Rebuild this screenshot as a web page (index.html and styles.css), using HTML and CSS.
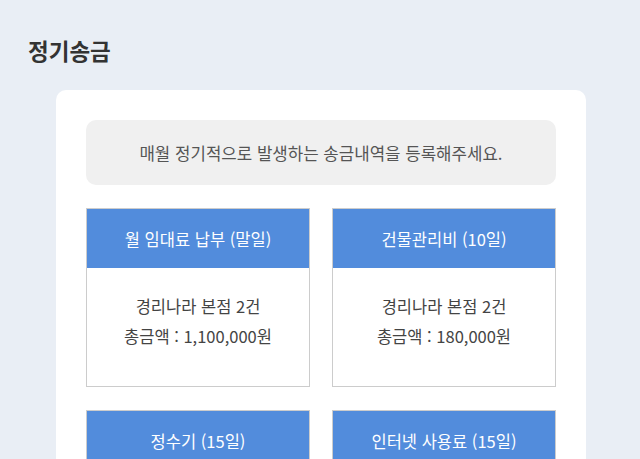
FILE: index.html
```html
<!DOCTYPE html>
<html lang="ko">
<head>
<meta charset="UTF-8">
<meta name="viewport" content="width=device-width, initial-scale=1.0">
<title>정기송금</title>
<link rel="stylesheet" href="styles.css">
</head>
<body>
<h1 class="page-title">정기송금</h1>
<div class="panel">
  <div class="notice">매월 정기적으로 발생하는 송금내역을 등록해주세요.</div>
  <div class="grid">
    <div class="item">
      <div class="item-head">월 임대료 납부 (말일)</div>
      <div class="item-body">
        <p>경리나라 본점 2건</p>
        <p>총금액 : 1,100,000원</p>
      </div>
    </div>
    <div class="item">
      <div class="item-head">건물관리비 (10일)</div>
      <div class="item-body">
        <p>경리나라 본점 2건</p>
        <p>총금액 : 180,000원</p>
      </div>
    </div>
    <div class="item">
      <div class="item-head">정수기 (15일)</div>
      <div class="item-body">
        <p>경리나라 본점 1건</p>
        <p>총금액 : 30,000원</p>
      </div>
    </div>
    <div class="item">
      <div class="item-head">인터넷 사용료 (15일)</div>
      <div class="item-body">
        <p>경리나라 본점 1건</p>
        <p>총금액 : 33,000원</p>
      </div>
    </div>
  </div>
</div>
</body>
</html>
```

FILE: styles.css
```css
body {
    margin: 0;
    padding: 0 0 40px;
    background-color: #e9eef5;
    font-family: "Noto Sans CJK KR", "Noto Sans", sans-serif;
    color: #333;
}
.page-title {
    margin: 0;
    padding: 35px 0 0 28px;
    font-size: 22.5px;
    font-weight: 700;
    line-height: 30px;
    color: #333;
}
.panel {
    margin: 25px 0 0 56px;
    width: 530px;
    box-sizing: border-box;
    padding: 30px;
    background-color: #fff;
    border-radius: 10px;
}
.notice {
    height: 65px;
    background-color: #f0f0f0;
    border-radius: 10px;
    display: flex;
    justify-content: center;
    align-items: center;
    font-size: 16.8px;
    color: #555;
}
.grid {
    margin-top: 23px;
    display: grid;
    grid-template-columns: 1fr 1fr;
    gap: 23px 22px;
}
.item {
    border: 1px solid #ccc;
    background-color: #fff;
}
.item-head {
    height: 59px;
    background-color: #528cdc;
    color: #fff;
    font-size: 16.5px;
    display: flex;
    justify-content: center;
    align-items: center;
}
.item-body {
    height: 118px;
    box-sizing: border-box;
    padding-top: 23px;
    text-align: center;
    font-size: 16.5px;
    color: #444;
}
.item-body p {
    margin: 0;
    line-height: 30px;
}
```
